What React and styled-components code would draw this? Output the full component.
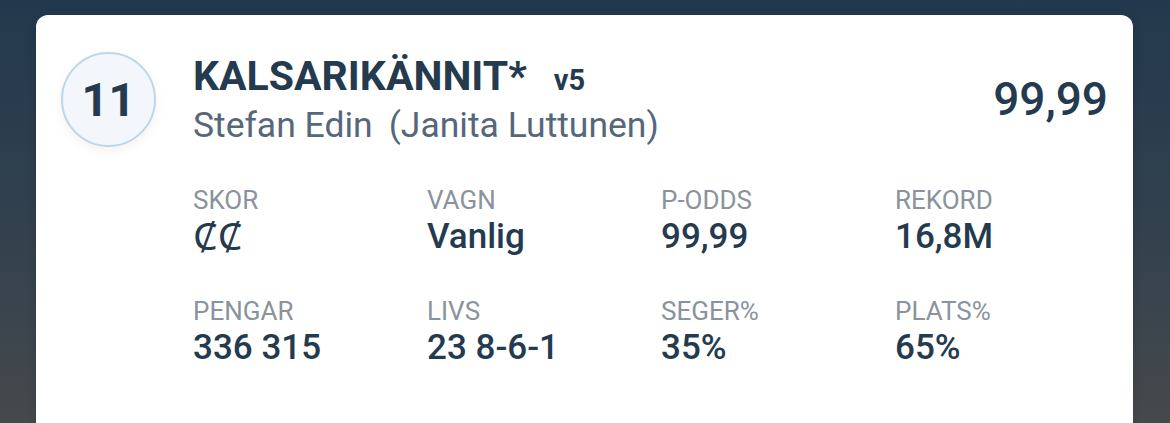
import React from 'react';
import styled, { createGlobalStyle } from 'styled-components';

const GlobalStyle = createGlobalStyle`
  html, body {
    margin: 0;
    padding: 0;
    height: 100%;
    overflow: hidden;
  }
  body {
    background: linear-gradient(180deg, #22394d 0%, #33414e 55%, #46494c 100%);
    font-family: Roboto, "Noto Sans", "Liberation Sans", sans-serif;
  }
`;

const stats = [
  { label: 'SKOR', value: 'ȻȻ', light: true },
  { label: 'VAGN', value: 'Vanlig' },
  { label: 'P-ODDS', value: '99,99' },
  { label: 'REKORD', value: '16,8M' },
  { label: 'PENGAR', value: '336 315' },
  { label: 'LIVS', value: '23 8-6-1' },
  { label: 'SEGER%', value: '35%' },
  { label: 'PLATS%', value: '65%' },
];

const App = () => {
  return (
    <>
      <GlobalStyle />
      <Page>
        <Card>
          <Header>
            <StartNumber>11</StartNumber>
            <TitleBlock>
              <NameRow>
                <HorseName>KALSARIKÄNNIT*</HorseName>
                <Age>v5</Age>
              </NameRow>
              <DriverRow>
                <span>Stefan Edin</span>
                <Trainer>(Janita Luttunen)</Trainer>
              </DriverRow>
            </TitleBlock>
            <Odds>99,99</Odds>
          </Header>
          <StatsGrid>
            {stats.map((s) => (
              <Stat key={s.label}>
                <Label>{s.label}</Label>
                <Value $light={s.light}>{s.value}</Value>
              </Stat>
            ))}
          </StatsGrid>
        </Card>
      </Page>
    </>
  );
};

// styled

const Page = styled.div`
  padding: 15px 37px 0 36px;
`;

const Card = styled.div`
  background: #ffffff;
  border-radius: 12px;
  padding: 37px 25px 0 25px;
  min-height: 480px;
  box-shadow: 0 2px 10px rgba(0, 0, 0, 0.15);
  color: #243a4f;
`;

const Header = styled.div`
  display: flex;
  align-items: flex-start;
`;

const StartNumber = styled.div`
  flex: 0 0 auto;
  width: 91px;
  height: 91px;
  border-radius: 50%;
  border: 2px solid #bcd6ec;
  background: #f3f7fb;
  box-shadow: 0 4px 10px rgba(180, 150, 120, 0.12);
  display: flex;
  align-items: center;
  justify-content: center;
  font-size: 47px;
  font-weight: 700;
  color: #243a4f;
  line-height: 1;
`;

const TitleBlock = styled.div`
  flex: 1;
  margin-left: 37px;
`;

const NameRow = styled.div`
  display: flex;
  align-items: baseline;
  line-height: 48px;
  height: 48px;
`;

const HorseName = styled.span`
  font-size: 41px;
  font-weight: 700;
  color: #243a4f;
`;

const Age = styled.span`
  font-size: 29px;
  font-weight: 700;
  color: #243a4f;
  margin-left: 27px;
`;

const DriverRow = styled.div`
  margin-top: 5px;
  font-size: 35.5px;
  line-height: 40px;
  color: #56677a;
`;

const Trainer = styled.span`
  margin-left: 16px;
`;

const Odds = styled.div`
  margin-top: 20px;
  font-size: 46px;
  line-height: 54px;
  font-weight: 500;
  color: #243a4f;
`;

const StatsGrid = styled.div`
  margin-top: 38px;
  margin-left: 132px;
  display: grid;
  grid-template-columns: repeat(4, 234px);
  row-gap: 39px;
`;

const Stat = styled.div`
  display: flex;
  flex-direction: column;
`;

const Label = styled.div`
  font-size: 26px;
  line-height: 30px;
  color: #89939d;
`;

const Value = styled.div`
  margin-top: 2px;
  font-size: ${(p) => (p.$light ? '39px' : '35px')};
  line-height: 40px;
  height: 40px;
  font-weight: ${(p) => (p.$light ? 400 : 500)};
  color: #243a4f;
`;

export default App;
